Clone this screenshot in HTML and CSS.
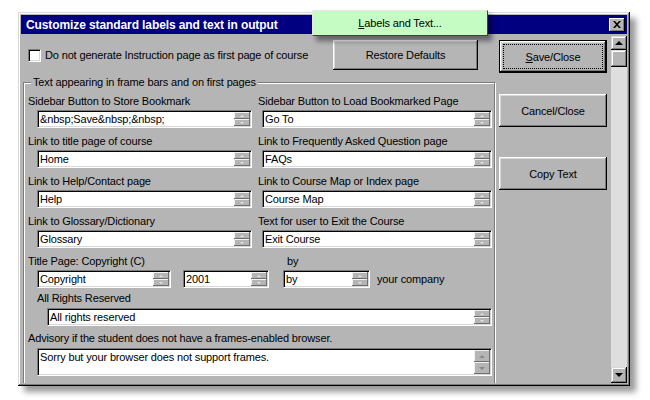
FILE: index.html
```html
<!DOCTYPE html>
<html lang="en">
<head>
    <meta charset="UTF-8">
    <title>Customize standard labels and text in output</title>
    <link rel="stylesheet" href="styles.css">
</head>
<body>
    <div class="desk">
        <div class="window">
            <div class="titlebar">
                <span class="title">Customize standard labels and text in output</span>
                <span class="close-btn">
                    <svg width="8" height="7" viewBox="0 0 8 7"><path d="M0 0h2l2 2.3L6 0h2L5 3.5 8 7H6L4 4.7 2 7H0l3-3.5z"/></svg>
                </span>
            </div>
            <div class="client">
                <div class="content">
                    <div class="top-row">
                        <label class="check"><span class="box"></span>Do not generate Instruction page as first page of course</label>
                        <button class="btn restore">Restore Defaults</button>
                    </div>

                    <fieldset class="group">
                        <legend>Text appearing in frame bars and on first pages</legend>
                        <div class="fields">
                            <div class="pairs">
                                <div class="field">
                                    <div class="label">Sidebar Button to Store Bookmark</div>
                                    <div class="input"><span class="val">&amp;nbsp;Save&amp;nbsp;&amp;nbsp;</span><span class="spin"><i class="up"></i><i class="dn"></i></span></div>
                                </div>
                                <div class="field right">
                                    <div class="label">Sidebar Button to Load Bookmarked Page</div>
                                    <div class="input"><span class="val">Go To</span><span class="spin"><i class="up"></i><i class="dn"></i></span></div>
                                </div>
                                <div class="field">
                                    <div class="label">Link to title page of course</div>
                                    <div class="input"><span class="val">Home</span><span class="spin"><i class="up"></i><i class="dn"></i></span></div>
                                </div>
                                <div class="field right">
                                    <div class="label">Link to Frequently Asked Question page</div>
                                    <div class="input"><span class="val">FAQs</span><span class="spin"><i class="up"></i><i class="dn"></i></span></div>
                                </div>
                                <div class="field">
                                    <div class="label">Link to Help/Contact page</div>
                                    <div class="input"><span class="val">Help</span><span class="spin"><i class="up"></i><i class="dn"></i></span></div>
                                </div>
                                <div class="field right">
                                    <div class="label">Link to Course Map or Index page</div>
                                    <div class="input"><span class="val">Course Map</span><span class="spin"><i class="up"></i><i class="dn"></i></span></div>
                                </div>
                                <div class="field">
                                    <div class="label">Link to Glossary/Dictionary</div>
                                    <div class="input"><span class="val">Glossary</span><span class="spin"><i class="up"></i><i class="dn"></i></span></div>
                                </div>
                                <div class="field right">
                                    <div class="label">Text for user to Exit the Course</div>
                                    <div class="input"><span class="val">Exit Course</span><span class="spin"><i class="up"></i><i class="dn"></i></span></div>
                                </div>
                            </div>

                            <div class="title-labels">
                                <span class="label copy-label">Title Page: Copyright (C)</span>
                                <span class="label">by</span>
                            </div>
                            <div class="title-inputs">
                                <div class="input copy"><span class="val">Copyright</span><span class="spin"><i class="up"></i><i class="dn"></i></span></div>
                                <div class="input year"><span class="val">2001</span><span class="spin"><i class="up"></i><i class="dn"></i></span></div>
                                <div class="input by"><span class="val">by</span><span class="spin"><i class="up"></i><i class="dn"></i></span></div>
                                <span class="company">your company</span>
                            </div>

                            <div class="label rights-label">All Rights Reserved</div>
                            <div class="input rights"><span class="val">All rights reserved</span><span class="spin"><i class="up"></i><i class="dn"></i></span></div>

                            <div class="label advisory-label">Advisory if the student does not have a frames-enabled browser.</div>
                            <div class="input area"><span class="val">Sorry but your browser does not support frames.</span><span class="spin"><i class="up"></i><i class="dn"></i></span></div>
                        </div>
                    </fieldset>
                </div>

                <div class="side">
                    <button class="btn side-btn default"><u>S</u>ave/Close</button>
                    <button class="btn side-btn cancel">Cancel/Close</button>
                    <button class="btn side-btn copy-btn">Copy Text</button>
                </div>

                <div class="vscroll">
                    <span class="sb-btn"><i class="arrow-up"></i></span>
                    <span class="thumb"></span>
                    <span class="track"></span>
                    <span class="sb-btn down"><i class="arrow-down"></i></span>
                </div>
            </div>
        </div>

        <div class="tip"><u>L</u>abels and Text...</div>
    </div>
</body>
</html>
```

FILE: styles.css
```css
body {
    margin: 0;
    background: #fff;
    font-family: "Liberation Sans", Arial, sans-serif;
    font-size: 11px;
    letter-spacing: -0.15px;
    color: #000;
}
.desk {
    position: relative;
    width: 650px;
    height: 400px;
    padding: 12px 0 0 18px;
    box-sizing: border-box;
}
.window {
    width: 612px;
    height: 374px;
    box-sizing: border-box;
    padding: 3px;
    background: #b5b5b5;
    display: flex;
    flex-direction: column;
    box-shadow: inset -1px -1px 0 #000, inset 1px 1px 0 #d8d8d8,
                inset -2px -2px 0 #7b7b7b, inset 2px 2px 0 #fff,
                6px 6px 6px rgba(0, 0, 0, 0.4);
}
.titlebar {
    height: 19px;
    flex: none;
    background: #000080;
    color: #fff;
    display: flex;
    align-items: center;
    justify-content: space-between;
    padding: 0 2px 0 5px;
}
.title {
    font-weight: bold;
    font-size: 12px;
    letter-spacing: -0.1px;
}
.close-btn {
    width: 16px;
    height: 14px;
    background: #b5b5b5;
    display: flex;
    align-items: center;
    justify-content: center;
    box-shadow: inset -1px -1px 0 #000, inset 1px 1px 0 #fff, inset -2px -2px 0 #7b7b7b;
}
.client {
    flex: 1;
    display: flex;
    overflow: hidden;
}
.content {
    width: 474px;
    flex: none;
}

/* top row */
.top-row {
    display: flex;
    align-items: center;
    justify-content: space-between;
    padding: 6px 17px 0 7px;
}
.check {
    display: flex;
    align-items: center;
    gap: 4px;
}
.box {
    width: 13px;
    height: 13px;
    box-sizing: border-box;
    background: #fff;
    border: 1px solid;
    border-color: #7b7b7b #fff #fff #7b7b7b;
    box-shadow: inset 1px 1px 0 #000, inset -1px -1px 0 #d8d8d8;
}
.btn {
    font: inherit;
    letter-spacing: inherit;
    color: #000;
    background: #b5b5b5;
    border: 0;
    padding: 0;
    box-shadow: inset -1px -1px 0 #000, inset 1px 1px 0 #fff,
                inset -2px -2px 0 #7b7b7b, inset 2px 2px 0 #d8d8d8;
}
.restore {
    width: 145px;
    height: 30px;
}

/* group box */
.group {
    margin: 5px 0 0 2px;
    padding: 0 0 12px;
    width: 472px;
    min-width: 0;
    box-sizing: border-box;
    border: 1px solid #7b7b7b;
    box-shadow: inset 1px 1px 0 #fff, 1px 1px 0 #fff;
}
.group legend {
    margin-left: 7px;
    padding: 0 2px;
    line-height: 14px;
    background: #b5b5b5;
}
.fields {
    padding: 4px 0 0 4px;
}
.pairs {
    display: grid;
    grid-template-columns: 230px 1fr;
    row-gap: 5px;
}
.label {
    line-height: 17px;
    white-space: nowrap;
}
.input {
    display: flex;
    height: 18px;
    box-sizing: border-box;
    background: #fff;
    border: 1px solid;
    border-color: #7b7b7b #fff #fff #7b7b7b;
    box-shadow: inset 1px 1px 0 #000, inset -1px -1px 0 #d8d8d8;
}
.val {
    flex: 1;
    padding: 1px 0 0 2px;
    line-height: 15px;
    white-space: nowrap;
    overflow: hidden;
}
.spin {
    width: 16px;
    margin: 1px 1px 1px 0;
    display: flex;
    flex-direction: column;
}
.spin i {
    flex: 1;
    display: flex;
    align-items: center;
    justify-content: center;
    background: #b5b5b5;
    box-shadow: inset -1px -1px 0 #6e6e6e, inset 1px 1px 0 #f2f2f2;
}
.spin i::after {
    content: "";
    border-left: 2px solid transparent;
    border-right: 2px solid transparent;
}
.spin .up::after {
    border-bottom: 2px solid #e4e4e4;
}
.spin .dn::after {
    border-top: 2px solid #e4e4e4;
}
.field .input {
    margin-left: 9px;
    width: 215px;
}
.field.right .input {
    margin-left: 4px;
    width: 230px;
}

/* title page row */
.title-labels {
    display: flex;
    margin-top: 5px;
}
.copy-label {
    width: 259px;
}
.title-inputs {
    display: flex;
    align-items: center;
    padding-left: 9px;
}
.input.copy {
    width: 134px;
}
.input.year {
    width: 86px;
    margin-left: 12px;
}
.input.by {
    width: 87px;
    margin-left: 14px;
}
.company {
    margin-left: 7px;
}
.rights-label {
    margin: 2px 0 0 9px;
}
.input.rights {
    margin: 1px 0 0 19px;
    width: 445px;
}
.advisory-label {
    margin-top: 4px;
}
.input.area {
    margin: 1px 0 0 9px;
    width: 455px;
    height: 28px;
}
.area .val {
    padding-top: 1px;
}
.area .spin .up::after {
    border-left-width: 3px;
    border-right-width: 3px;
    border-bottom: 3px solid #8a8a8a;
}
.area .spin .dn::after {
    border-left-width: 3px;
    border-right-width: 3px;
    border-top: 3px solid #8a8a8a;
}

/* right buttons */
.side {
    width: 116px;
    flex: none;
    box-sizing: border-box;
    padding: 6px 0 0 4px;
    display: flex;
    flex-direction: column;
}
.side-btn {
    width: 108px;
    height: 33px;
}
.side-btn.default {
    border: 1px solid #000;
    outline: 1px dotted #000;
    outline-offset: -5px;
}
.side-btn.cancel {
    margin-top: 21px;
}
.side-btn.copy-btn {
    margin-top: 30px;
}

/* scrollbar */
.vscroll {
    width: 16px;
    flex: none;
    display: flex;
    flex-direction: column;
    padding-top: 2px;
}
.sb-btn,
.thumb {
    flex: none;
    background: #b5b5b5;
    display: flex;
    align-items: center;
    justify-content: center;
    box-shadow: inset -1px -1px 0 #000, inset 1px 1px 0 #d8d8d8,
                inset -2px -2px 0 #7b7b7b, inset 2px 2px 0 #fff;
}
.sb-btn {
    height: 14px;
}
.sb-btn.down {
    height: 16px;
}
.thumb {
    height: 17px;
}
.track {
    flex: 1;
    background: #dedede;
}
.arrow-up {
    border-left: 4px solid transparent;
    border-right: 4px solid transparent;
    border-bottom: 4px solid #000;
}
.arrow-down {
    border-left: 4px solid transparent;
    border-right: 4px solid transparent;
    border-top: 4px solid #000;
}

/* floating label over the title bar */
.tip {
    position: absolute;
    left: 312px;
    top: 10px;
    width: 176px;
    height: 26px;
    box-sizing: border-box;
    background: #c4fcc4;
    border-top: 1px solid #e8e8e8;
    border-left: 1px solid #e8e8e8;
    border-right: 1px solid #404040;
    border-bottom: 1px solid #404040;
    display: flex;
    align-items: center;
    justify-content: center;
    box-shadow: 4px 5px 5px rgba(0, 0, 0, 0.45);
}
```
